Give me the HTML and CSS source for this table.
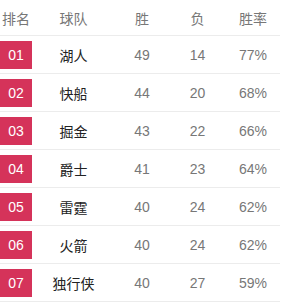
FILE: index.html
```html
<!DOCTYPE html>
<html>
<head>
<meta charset="utf-8">
<link rel="stylesheet" href="styles.css">
</head>
<body>
<div class="table">
  <div class="row head">
    <div class="c">排名</div><div class="c">球队</div><div class="c">胜</div><div class="c">负</div><div class="c">胜率</div>
  </div>
  <div class="row"><div class="c"><span class="rank">01</span></div><div class="c team">湖人</div><div class="c num">49</div><div class="c num">14</div><div class="c num">77%</div></div>
  <div class="row"><div class="c"><span class="rank">02</span></div><div class="c team">快船</div><div class="c num">44</div><div class="c num">20</div><div class="c num">68%</div></div>
  <div class="row"><div class="c"><span class="rank">03</span></div><div class="c team">掘金</div><div class="c num">43</div><div class="c num">22</div><div class="c num">66%</div></div>
  <div class="row"><div class="c"><span class="rank">04</span></div><div class="c team">爵士</div><div class="c num">41</div><div class="c num">23</div><div class="c num">64%</div></div>
  <div class="row"><div class="c"><span class="rank">05</span></div><div class="c team">雷霆</div><div class="c num">40</div><div class="c num">24</div><div class="c num">62%</div></div>
  <div class="row"><div class="c"><span class="rank">06</span></div><div class="c team">火箭</div><div class="c num">40</div><div class="c num">24</div><div class="c num">62%</div></div>
  <div class="row"><div class="c"><span class="rank">07</span></div><div class="c team">独行侠</div><div class="c num">40</div><div class="c num">27</div><div class="c num">59%</div></div>
</div>
</body>
</html>
```
FILE: styles.css
```css
html, body {
  margin: 0;
  padding: 0;
  background: #fff;
}
body {
  font-family: "Liberation Sans", "Noto Sans CJK SC", sans-serif;
  font-size: 14px;
  color: #777;
}
.table {
  width: 280px;
}
.row {
  display: grid;
  grid-template-columns: 32px 83px 54px 57px 54px;
  align-items: center;
  height: 37px;
  border-bottom: 1px solid #ececec;
}
.head {
  height: 35px;
  color: #777;
}
.c {
  text-align: center;
}
.rank {
  display: flex;
  align-items: center;
  justify-content: center;
  width: 32px;
  height: 28px;
  background: #d5335a;
  color: #fff;
}
.team {
  color: #222;
}
.num {
  color: #777;
}
```
